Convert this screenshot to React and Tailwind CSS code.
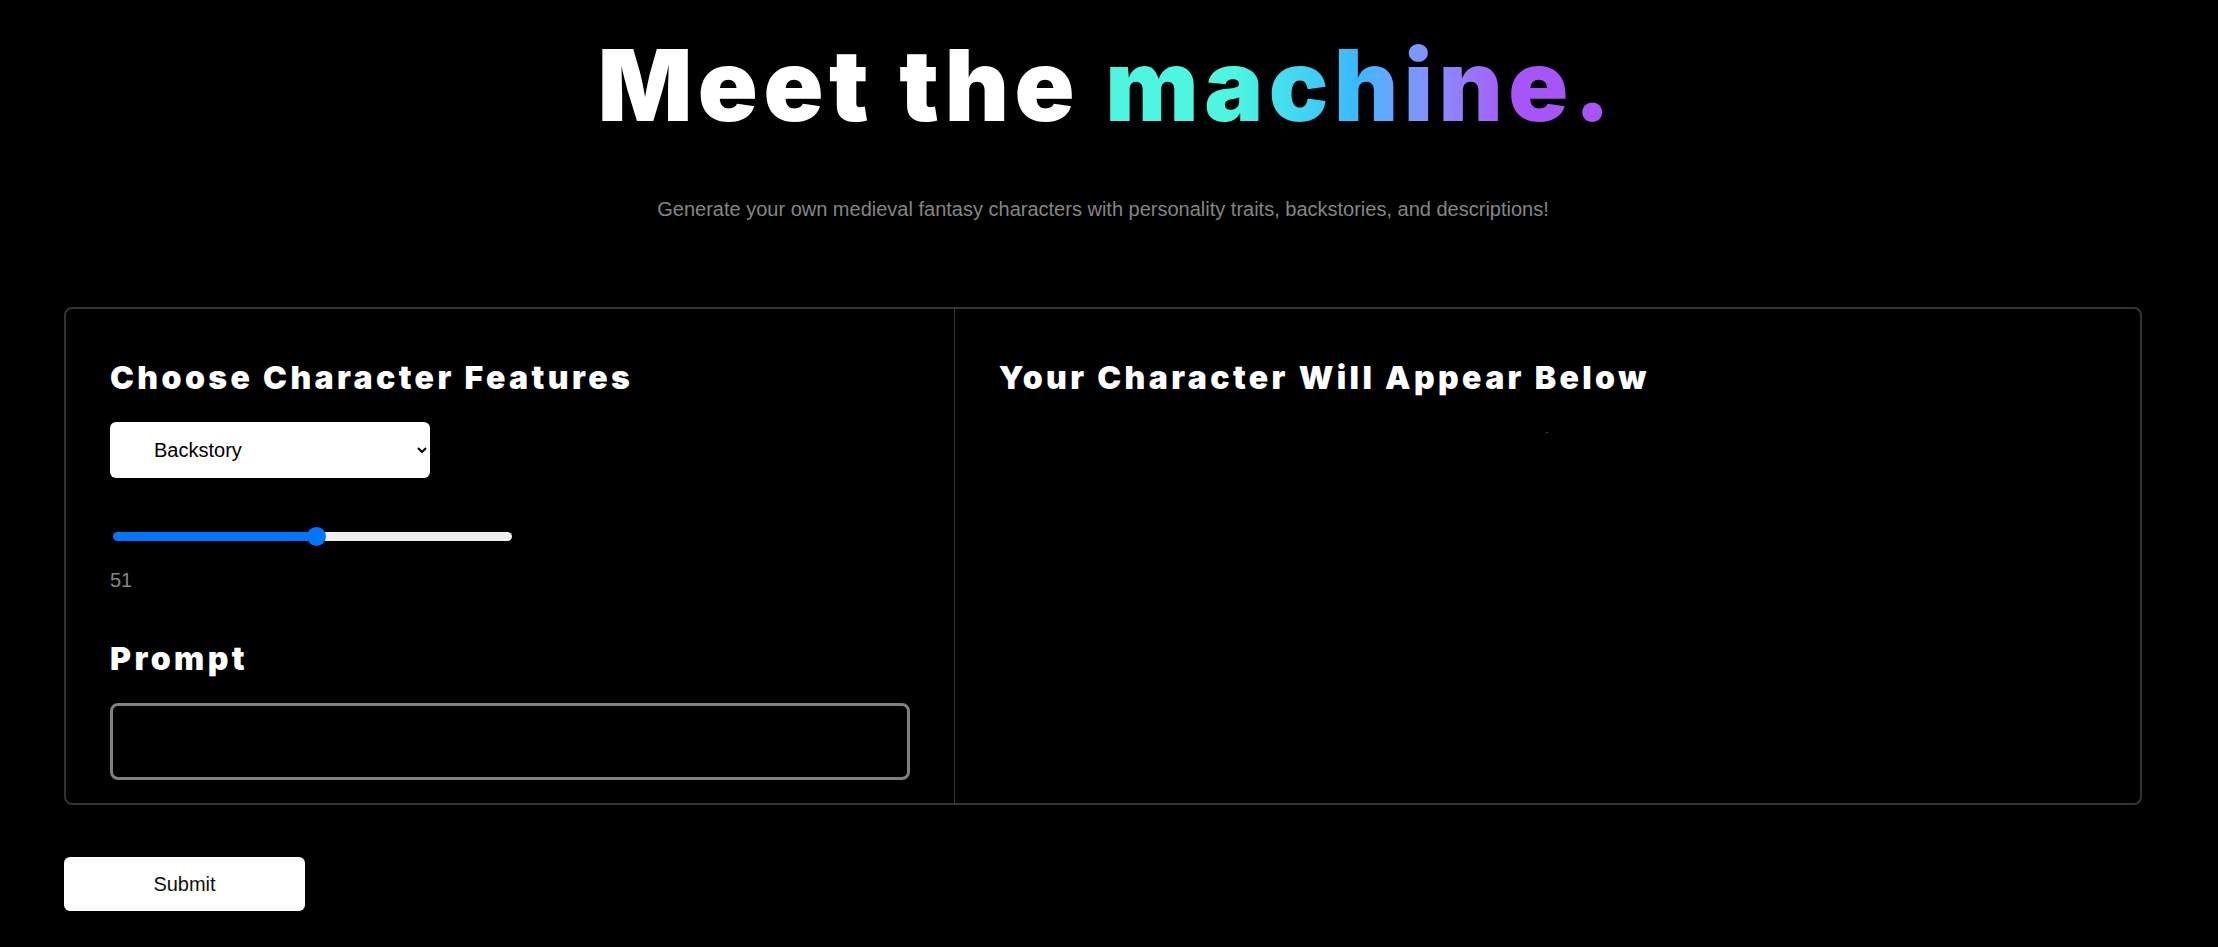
import { useState } from 'react'

const heavy = "font-['Inter',_'Liberation_Sans',_sans-serif] font-black text-white"

export default function App() {
  const [feature, setFeature] = useState('backstory')
  const [level, setLevel] = useState(51)
  const [prompt, setPrompt] = useState('')

  return (
    <div className="min-h-[947px] bg-black font-['Liberation_Sans',_Arial,_sans-serif] pl-[64px] pr-[76px] pt-[36px] pb-[37px]">
      <h1 className={`${heavy} pl-[8px] text-center text-[99px] leading-none tracking-[5.5px]`}>
        Meet the{' '}
        <span className="bg-linear-to-r from-[#4ef6df] from-25% via-[#3db6ff] via-50% to-[#a855f7] to-80% bg-clip-text text-transparent">
          machine.
        </span>
      </h1>
      <p className="mt-[60px] text-center text-[20px] leading-7 text-[#858585]">
        Generate your own medieval fantasy characters with personality traits, backstories, and descriptions!
      </p>

      <div className="mt-[84px] grid grid-cols-[3fr_4fr] rounded-lg border-2 border-[#333]">
        <div className="px-[44px] pt-[49px] pb-[23px] border-r border-[#333]">
          <h2 className={`${heavy} text-[32px] leading-[40px] tracking-[3.4px]`}>Choose Character Features</h2>
          <select
            value={feature}
            onChange={e => setFeature(e.target.value)}
            className="mt-[24px] block w-[320px] h-[56px] rounded-md bg-white pl-[40px] pr-[10px] text-[20px] text-black"
          >
            <option value="backstory">Backstory</option>
            <option value="personality">Personality</option>
            <option value="description">Description</option>
          </select>
          <input
            type="range"
            min="0"
            max="100"
            value={level}
            onChange={e => setLevel(Number(e.target.value))}
            style={{ background: `linear-gradient(to right, #0075ff ${level}%, #efefef ${level}%)` }}
            className="mt-[54px] ml-[3px] block w-[399px] h-[9px] appearance-none rounded-full cursor-pointer [&::-webkit-slider-thumb]:appearance-none [&::-webkit-slider-thumb]:w-[19px] [&::-webkit-slider-thumb]:h-[19px] [&::-webkit-slider-thumb]:rounded-full [&::-webkit-slider-thumb]:bg-[#0075ff]"
          />
          <div className="mt-[25px] text-[20px] leading-7 text-[#858585]">{level}</div>
          <h2 className={`${heavy} mt-[45px] text-[32px] leading-[40px] tracking-[3.4px]`}>Prompt</h2>
          <input
            value={prompt}
            onChange={e => setPrompt(e.target.value)}
            className="mt-[24px] block w-full h-[77px] rounded-lg border-[3px] border-[#808080] bg-black px-4 text-[20px] text-white outline-none"
          />
        </div>
        <div className="px-[44px] pt-[49px]">
          <h2 className={`${heavy} text-[32px] leading-[40px] tracking-[3.4px]`}>Your Character Will Appear Below</h2>
          <div className="mt-[34px] ml-[547px] w-[2px] h-[1px] bg-[#444]" />
        </div>
      </div>

      <button className="mt-[52px] block w-[241px] h-[54px] rounded-md bg-white text-[20px] text-[#111]">
        Submit
      </button>
    </div>
  )
}
